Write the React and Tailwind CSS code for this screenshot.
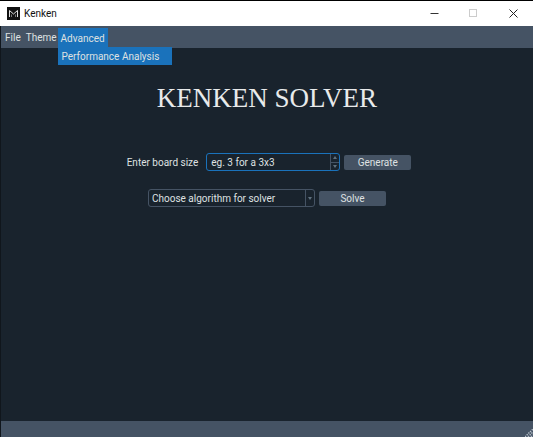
import React from "react";

function AppLogo() {
  return (
    <svg width="13" height="13" viewBox="0 0 13 13" aria-hidden="true">
      <rect width="13" height="13" fill="#111" />
      <path d="M2.5 10V3.5L6.5 7L10.5 3.5V10" fill="none" stroke="#e0e0e0" strokeWidth="1" />
      <path d="M4.5 10V7.5M8.5 10V7.5" fill="none" stroke="#777" strokeWidth="1" />
    </svg>
  );
}

function TitleBar() {
  return (
    <header className="flex h-[26px] items-center border-t border-black bg-white pl-[7px] text-[#111]">
      <AppLogo />
      <h1 className="ml-1 flex-1">Kenken</h1>
      <button aria-label="Minimize" className="flex w-[39px] justify-center">
        <svg width="9" height="9" viewBox="0 0 9 9">
          <path d="M0.5 4.5H8.5" stroke="#333" />
        </svg>
      </button>
      <button aria-label="Maximize" disabled className="flex w-[39px] justify-center">
        <svg width="9" height="9" viewBox="0 0 9 9">
          <rect x="0.5" y="0.5" width="7" height="7" fill="none" stroke="#ccc" />
        </svg>
      </button>
      <button aria-label="Close" className="flex w-10 justify-center">
        <svg width="9" height="9" viewBox="0 0 9 9">
          <path d="M0.5 0.5L8.5 8.5M8.5 0.5L0.5 8.5" stroke="#222" />
        </svg>
      </button>
    </header>
  );
}

function MenuBar() {
  return (
    <nav className="flex h-[22px] bg-[#455364] pl-[2px]">
      <button className="px-[2px]">File</button>
      <button className="pr-px pl-[3px]">Theme</button>
      <div className="relative mt-[2px]">
        <button aria-expanded="true" className="h-5 w-[50px] bg-[#1a72bb]">
          Advanced
        </button>
        <div role="menu" className="absolute top-[19px] left-0 flex bg-[#1a72bb]">
          <button role="menuitem" className="h-[18px] w-[114px] pl-1 text-left whitespace-nowrap">
            Performance Analysis
          </button>
        </div>
      </div>
    </nav>
  );
}

const actionButton = "h-[15px] w-[67px] rounded-[2px] bg-[#455364] leading-[15px]";

export default function App() {
  return (
    <div className="flex min-h-screen flex-col bg-[#19232d] font-[Roboto,'Noto_Sans',sans-serif] text-[10px] text-[#dfe1e2]">
      <TitleBar />
      <div className="flex flex-1 flex-col border-l border-[#10161c]">
        <MenuBar />
        <main className="flex flex-1 flex-col items-center pt-[34px]">
          <h2 className="font-['Liberation_Serif',serif] text-[27px] leading-8 text-[#e8eaeb]">KENKEN SOLVER</h2>
          <div className="mt-[39px] flex items-center pl-1">
            <label htmlFor="size" className="mr-2">
              Enter board size
            </label>
            <div className="flex h-[18px] w-[134px] rounded-[3px] border border-[#1a72bb]">
              <input
                id="size"
                placeholder="eg. 3 for a 3x3"
                className="min-w-0 flex-1 bg-transparent pl-1 outline-none placeholder:text-[#dfe1e2]"
              />
              <div className="flex w-[9px] flex-col border-l border-[#455364]">
                <button aria-label="Increase" className="flex flex-1 items-center justify-center border-b border-[#455364]">
                  <svg width="4" height="3" viewBox="0 0 4 3">
                    <path d="M0 3L2 0L4 3Z" fill="#60717f" />
                  </svg>
                </button>
                <button aria-label="Decrease" className="flex flex-1 items-center justify-center">
                  <svg width="4" height="3" viewBox="0 0 4 3">
                    <path d="M0 0L2 3L4 0Z" fill="#60717f" />
                  </svg>
                </button>
              </div>
            </div>
            <button className={`ml-1 ${actionButton}`}>Generate</button>
          </div>
          <div className="mt-[18px] flex items-center">
            <div className="flex h-[18px] w-[167px] items-stretch rounded-[3px] border border-[#455364]">
              <select aria-label="Solver algorithm" className="min-w-0 flex-1 appearance-none bg-transparent pl-[3px] outline-none">
                <option>Choose algorithm for solver</option>
              </select>
              <span className="flex w-[9px] items-center justify-center border-l border-[#455364]">
                <svg width="4" height="3" viewBox="0 0 4 3" aria-hidden="true">
                  <path d="M0 0L2 3L4 0Z" fill="#60717f" />
                </svg>
              </span>
            </div>
            <button className={`ml-1 ${actionButton}`}>Solve</button>
          </div>
        </main>
        <footer className="flex h-4 items-end justify-end bg-[#455364]">
          <svg width="8" height="8" viewBox="0 0 8 8" aria-hidden="true">
            <path d="M0 8L8 0M3 8L8 3M6 8L8 6" stroke="#b4bec8" strokeWidth="1.4" strokeDasharray="1.4 1" />
          </svg>
        </footer>
      </div>
    </div>
  );
}
